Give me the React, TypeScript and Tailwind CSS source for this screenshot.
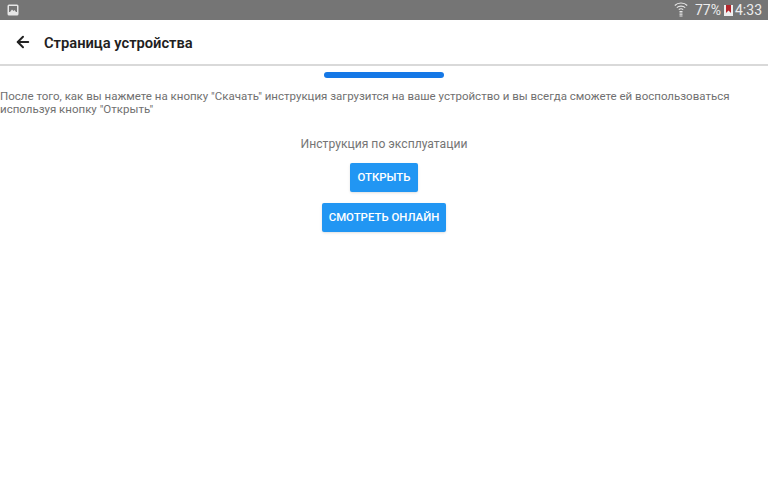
import { FiArrowLeft } from "react-icons/fi";

const StatusBar = () => (
  <div className="flex h-[20px] items-center justify-between bg-[#757575] pl-[7px] pr-[6px] text-[#ececec]">
    <svg width="12" height="12" viewBox="0 0 12 12">
      <rect x="0.5" y="0.5" width="11" height="11" rx="1.5" fill="#e6e6e6" />
      <rect x="2" y="2" width="8" height="6" fill="#757575" />
      <path d="M3 8 L5 5.5 L6.5 7 L7.5 6 L9 8 Z" fill="#e6e6e6" />
    </svg>
    <div className="flex items-center text-[14px] leading-[20px]">
      <svg width="14" height="16" viewBox="0 0 14 16" className="mr-[7px] mb-[2px]" fill="none" stroke="#e8e8e8" strokeWidth="1.1">
        <path d="M0.8 4.5 C4 1.2 10 1.2 13.2 4.5" />
        <path d="M2.8 6.6 C5 4.6 9 4.6 11.2 6.6" />
        <path d="M4.8 8.6 C6 7.7 8 7.7 9.2 8.6" />
        <path d="M7 10 V15.5" strokeWidth="3" strokeDasharray="1 0.6" />
      </svg>
      <span>77%</span>
      <svg width="9" height="12" viewBox="0 0 9 12" className="ml-[3px] mr-[2px]">
        <rect x="0" y="1" width="9" height="11" fill="#eee" />
        <rect x="2" y="1" width="5" height="8" fill="#b3262c" />
        <path d="M2 9 L4.5 6.5 L7 9 Z" fill="#eee" />
      </svg>
      <span>4:33</span>
    </div>
  </div>
);

export default function App() {
  return (
    <div className="h-[480px] w-[768px] overflow-hidden bg-white font-['Roboto',sans-serif]">
      <StatusBar />
      <header className="flex h-[46px] items-center border-b-2 border-[#d9d9d9] pl-[14px]">
        <FiArrowLeft className="mb-[1px] stroke-[2.6] text-[18px] text-[#222]" />
        <h1 className="ml-[12px] mt-[2px] text-[14.7px] font-semibold text-[#212121]">Страница устройства</h1>
      </header>
      <div className="mx-auto mt-[6px] h-[6px] w-[120px] rounded-full bg-[#1578e6]" />
      <p className="mt-[12px] text-[11.5px] leading-[13px] text-[#707070]">
        После того, как вы нажмете на кнопку "Скачать" инструкция загрузится на ваше устройство и вы всегда сможете ей воспользоваться используя кнопку "Открыть"
      </p>
      <div className="mt-[20px] flex flex-col items-center">
        <div className="text-[12.15px] leading-[16px] text-[#757575]">Инструкция по эксплуатации</div>
        <button className="mt-[11px] h-[29px] w-[68px] rounded-[2px] bg-[#2196f3] text-[11.4px] font-medium text-white shadow-sm">ОТКРЫТЬ</button>
        <button className="mt-[11px] h-[29px] w-[124px] rounded-[2px] bg-[#2196f3] text-[11.4px] font-medium text-white shadow-sm">СМОТРЕТЬ ОНЛАЙН</button>
      </div>
    </div>
  );
}
